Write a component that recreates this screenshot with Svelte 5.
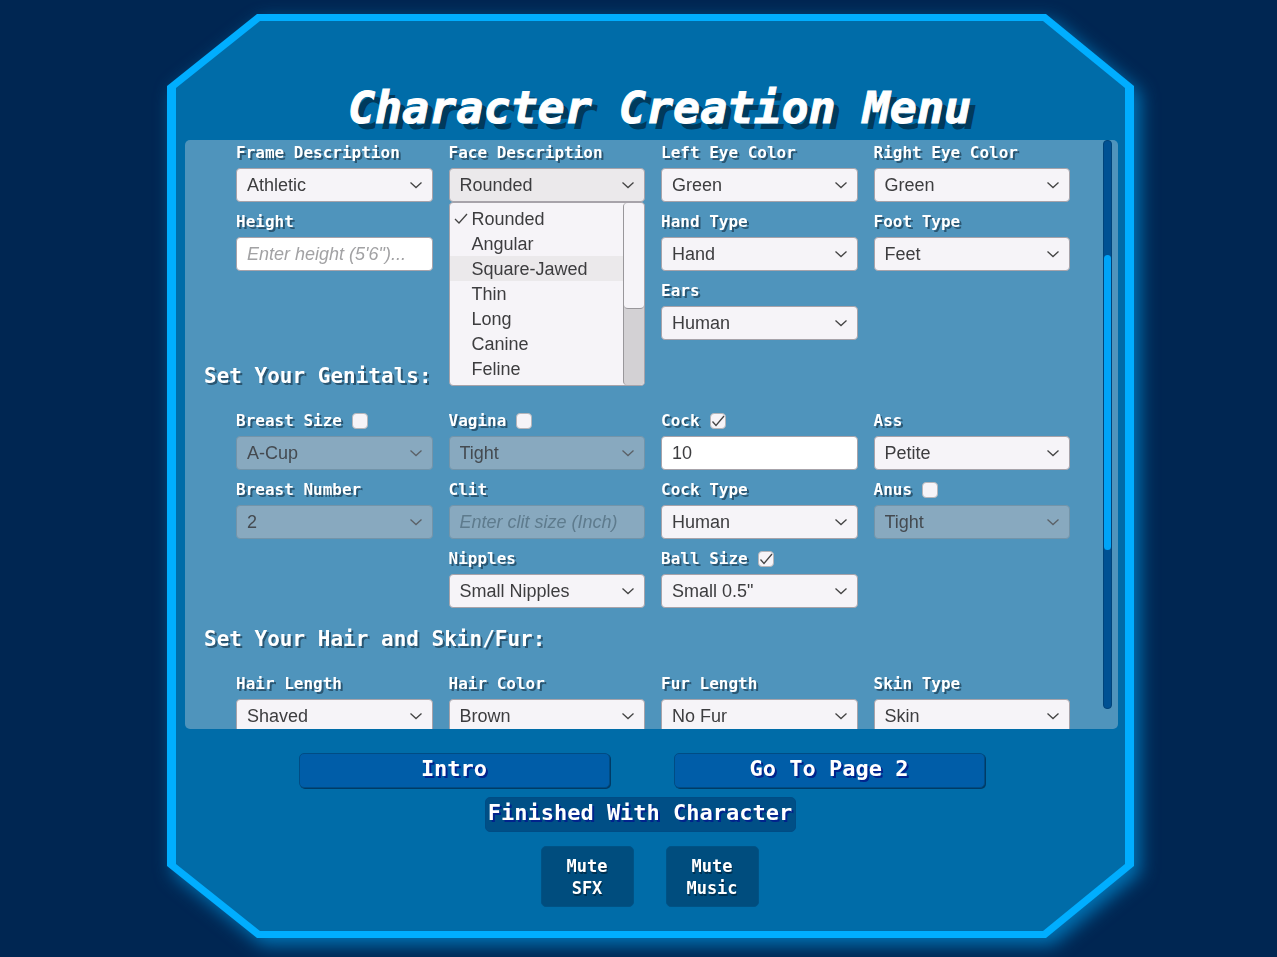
<script>

const sections = [
  {
    title: "",
    fields: [
      { id: "frame", label: "Frame Description", value: "Athletic" },
      {
        id: "face",
        label: "Face Description",
        value: "Rounded",
        menu: ["Rounded", "Angular", "Square-Jawed", "Thin", "Long", "Canine", "Feline"]
      },
      { id: "left-eye", label: "Left Eye Color", value: "Green" },
      { id: "right-eye", label: "Right Eye Color", value: "Green" },
      { id: "height", label: "Height", text: true, value: "", placeholder: "Enter height (5'6\")..." },
      null,
      { id: "hand", label: "Hand Type", value: "Hand" },
      { id: "foot", label: "Foot Type", value: "Feet" },
      null,
      null,
      { id: "ears", label: "Ears", value: "Human" },
      null
    ]
  },
  {
    title: "Set Your Genitals:",
    fields: [
      { id: "breast-size", label: "Breast Size", value: "A-Cup", toggle: true, enabled: false, disabled: true },
      { id: "vagina", label: "Vagina", value: "Tight", toggle: true, enabled: false, disabled: true },
      { id: "cock", label: "Cock", text: true, value: "10", toggle: true, enabled: true },
      { id: "ass", label: "Ass", value: "Petite" },
      { id: "breast-number", label: "Breast Number", value: "2", disabled: true },
      { id: "clit", label: "Clit", text: true, value: "", placeholder: "Enter clit size (Inch)", disabled: true },
      { id: "cock-type", label: "Cock Type", value: "Human" },
      { id: "anus", label: "Anus", value: "Tight", toggle: true, enabled: false, disabled: true },
      null,
      { id: "nipples", label: "Nipples", value: "Small Nipples" },
      { id: "ball-size", label: "Ball Size", value: "Small 0.5\"", toggle: true, enabled: true },
      null
    ]
  },
  {
    title: "Set Your Hair and Skin/Fur:",
    fields: [
      { id: "hair-length", label: "Hair Length", value: "Shaved" },
      { id: "hair-color", label: "Hair Color", value: "Brown" },
      { id: "fur-length", label: "Fur Length", value: "No Fur" },
      { id: "skin", label: "Skin Type", value: "Skin" }
    ]
  }
];

let hovered = "Square-Jawed";

</script>

<main class="page">
  <div class="glow">
    <div class="frame">
      <div class="screen">
        <h1>Character Creation Menu</h1>

        <div class="panel">
          <div class="content">
            {#each sections as section}
              <section>
                {#if section.title}
                  <h2>{section.title}</h2>
                {/if}
                <div class="fields">
                  {#each section.fields as field}
                    {#if field}
                      <div class="field">
                        <div class="caption">
                          <label for={field.id}>{field.label}</label>
                          {#if field.toggle}
                            <span class="toggle">
                              <input type="checkbox" aria-label={"Has " + field.label} bind:checked={field.enabled} />
                              {#if field.enabled}
                                <svg viewBox="0 0 16 16"><path d="M2.5 8.5 L6 12.5 L14 3" /></svg>
                              {/if}
                            </span>
                          {/if}
                        </div>
                        {#if field.text}
                          <input
                            id={field.id}
                            class="box"
                            type="text"
                            value={field.value}
                            placeholder={field.placeholder}
                            disabled={field.disabled}
                          />
                        {:else}
                          <div class="dropdown" class:disabled={field.disabled}>
                            <select id={field.id} class="box" class:open={field.menu} disabled={field.disabled}>
                              {#each field.menu || [field.value] as option}
                                <option>{option}</option>
                              {/each}
                            </select>
                            <svg viewBox="0 0 14 8"><path d="M1.5 1.5 L7 6.5 L12.5 1.5" /></svg>
                          </div>
                        {/if}
                        {#if field.menu}
                          <div class="menu">
                            <ul role="listbox" aria-label={field.label}>
                              {#each field.menu as option}
                                <li
                                  role="option"
                                  aria-selected={option === field.value}
                                  class:hovered={option === hovered}
                                  on:mouseenter={() => (hovered = option)}
                                >
                                  <span class="tick">
                                    {#if option === field.value}
                                      <svg viewBox="0 0 14 12"><path d="M1 6 L5 10 L13 1" /></svg>
                                    {/if}
                                  </span>
                                  {option}
                                </li>
                              {/each}
                            </ul>
                            <div class="menu-track"><div class="menu-thumb"></div></div>
                          </div>
                        {/if}
                      </div>
                    {:else}
                      <div class="blank"></div>
                    {/if}
                  {/each}
                </div>
              </section>
            {/each}
          </div>
          <div class="track"><div class="thumb"></div></div>
        </div>

        <footer>
          <div class="row pages">
            <button class="wide">Intro</button>
            <button class="wide">Go To Page 2</button>
          </div>
          <div class="row finish">
            <button class="wide dark">Finished With Character</button>
          </div>
          <div class="row sound">
            <button class="mute">Mute<br />SFX</button>
            <button class="mute">Mute<br />Music</button>
          </div>
        </footer>
      </div>
    </div>
  </div>
</main>

<style>

:global(body) {
  background: #002652;
}

* {
  box-sizing: border-box;
}

.page {
  height: 100vh;
  padding: 14px 143px 19px 167px;
  overflow: hidden;
  font-family: "DejaVu Sans Mono", monospace;
  font-weight: bold;
  color: #fff;
}

.glow {
  height: 100%;
  filter: drop-shadow(6px 7px 9px rgba(0, 130, 200, 0.85));
}

.frame {
  height: 100%;
  padding: 7px 9px;
  background: #00aeff;
  clip-path: polygon(90px 0, calc(100% - 88px) 0, 100% 72px, 100% calc(100% - 72px), calc(100% - 88px) 100%, 90px 100%, 0 calc(100% - 72px), 0 72px);
}

.screen {
  height: 100%;
  display: flex;
  flex-direction: column;
  padding: 0 7px 0 9px;
  background: #006ca8;
  clip-path: polygon(84px 0, calc(100% - 82px) 0, 100% 67px, 100% calc(100% - 67px), calc(100% - 82px) 100%, 84px 100%, 0 calc(100% - 67px), 0 67px);
}

h1 {
  margin: 0;
  padding: 55px 0 0 16px;
  font-size: 45px;
  line-height: 64px;
  font-style: italic;
  text-align: center;
  -webkit-text-stroke: 1px #fff;
  text-shadow: 6px 6px 0 #003a5c;
}

.panel {
  flex: 1;
  min-height: 0;
  display: flex;
  overflow: hidden;
  border-radius: 5px;
  background: #4f94bc;
}

.content {
  flex: 1;
  padding: 0 33px 0 19px;
  margin-top: -7px;
}

section:first-child {
  padding-bottom: 5px;
}

h2 {
  margin: 0;
  padding: 15px 0 9px;
  font-size: 21px;
  line-height: 32px;
  text-shadow: 2px 2px 0 #2a5672;
}

.fields {
  display: grid;
  grid-template-columns: repeat(4, 1fr);
  column-gap: 16px;
  padding-left: 32px;
}

.field {
  position: relative;
  min-width: 0;
}

.caption {
  display: flex;
  align-items: center;
  gap: 10px;
  height: 35px;
  padding: 8px 0 3px;
  font-size: 16px;
  line-height: 24px;
  white-space: nowrap;
  text-shadow: 2px 2px 0 #2a5672;
}

.toggle {
  display: grid;
  width: 16px;
  height: 16px;
}

.toggle input,
.toggle svg {
  grid-area: 1 / 1;
  width: 16px;
  height: 16px;
  margin: 0;
}

.toggle input {
  appearance: none;
  background: #f6f4f8;
  border: 1px solid #b5b5ba;
  border-radius: 4px;
}

svg {
  pointer-events: none;
  fill: none;
  stroke: #444;
  stroke-width: 1.3;
}

.dropdown {
  display: grid;
  align-items: center;
}

.dropdown svg {
  grid-area: 1 / 1;
  justify-self: end;
  width: 14px;
  height: 8px;
  margin-right: 10px;
}

.dropdown.disabled svg {
  stroke: #5b6167;
}

.box {
  grid-area: 1 / 1;
  display: block;
  width: 100%;
  height: 34px;
  margin: 0;
  padding: 0 10px;
  appearance: none;
  font-family: "Liberation Sans", Arial, sans-serif;
  font-size: 18px;
  color: #3d3d3f;
  background: #fff;
  border: 1px solid #a7a3aa;
  border-radius: 4px;
  opacity: 1;
}

select.box {
  background: #f6f4f8;
}

select.box.open {
  background: #ebe9eb;
}

.box:disabled {
  color: #444a50;
  background: #88a9bf;
  border-color: #7394a9;
}

.box::placeholder {
  color: #a2a2a4;
  font-style: italic;
}

.box:disabled::placeholder {
  color: #5e7b8d;
}

.menu {
  position: absolute;
  z-index: 1;
  top: 100%;
  left: 0;
  right: 0;
  display: flex;
  height: 184px;
  overflow: hidden;
  border: 1px solid #a7a3aa;
  border-radius: 4px;
  background: #f6f4f8;
  font: 18px/26px "Liberation Sans", Arial, sans-serif;
  color: #3d3d3f;
}

ul {
  flex: 1;
  margin: 0;
  padding: 3px 0;
  list-style: none;
}

li {
  display: flex;
  height: 25px;
  white-space: nowrap;
}

li.hovered {
  background: #ebe9eb;
}

.tick {
  width: 22px;
  padding-left: 4px;
}

.tick svg {
  width: 14px;
  height: 12px;
}

.menu-track {
  width: 21px;
  background: #d3d1d4;
  border-left: 1px solid #99979b;
  border-radius: 4px;
}

.menu-thumb {
  height: 58%;
  background: #f6f4f8;
  border-bottom: 1px solid #99979b;
  border-radius: 4px;
}

.track {
  width: 9px;
  margin: 0 6px 20px 0;
  padding-top: 114px;
  background: #005193;
  border: 1px solid #00447a;
  border-radius: 4px;
}

.thumb {
  height: 295px;
  background: #00a4f8;
  border-radius: 4px;
}

footer {
  padding: 24px 0;
}

.row {
  display: flex;
  justify-content: center;
}

.pages {
  gap: 64px;
  padding-right: 20px;
}

.finish {
  padding: 9px 23px 14px 0;
}

.sound {
  gap: 32px;
  padding-right: 4px;
}

button {
  padding: 0;
  font: inherit;
  color: #fff;
  border: 1px solid #004c84;
  border-radius: 5px;
}

.wide {
  width: 311px;
  height: 35px;
  padding-bottom: 3px;
  font-size: 22px;
  line-height: 30px;
  background: #005da8;
  box-shadow: 1px 1px 0 #003b66;
  text-shadow: 2px 2px 0 #00238c;
}

.dark {
  background: #004f86;
  box-shadow: none;
}

.mute {
  width: 93px;
  height: 61px;
  font-size: 17px;
  line-height: 22px;
  background: #004d7e;
  border-color: #005285;
  text-shadow: 1px 2px 0 #00304f;
}

</style>
